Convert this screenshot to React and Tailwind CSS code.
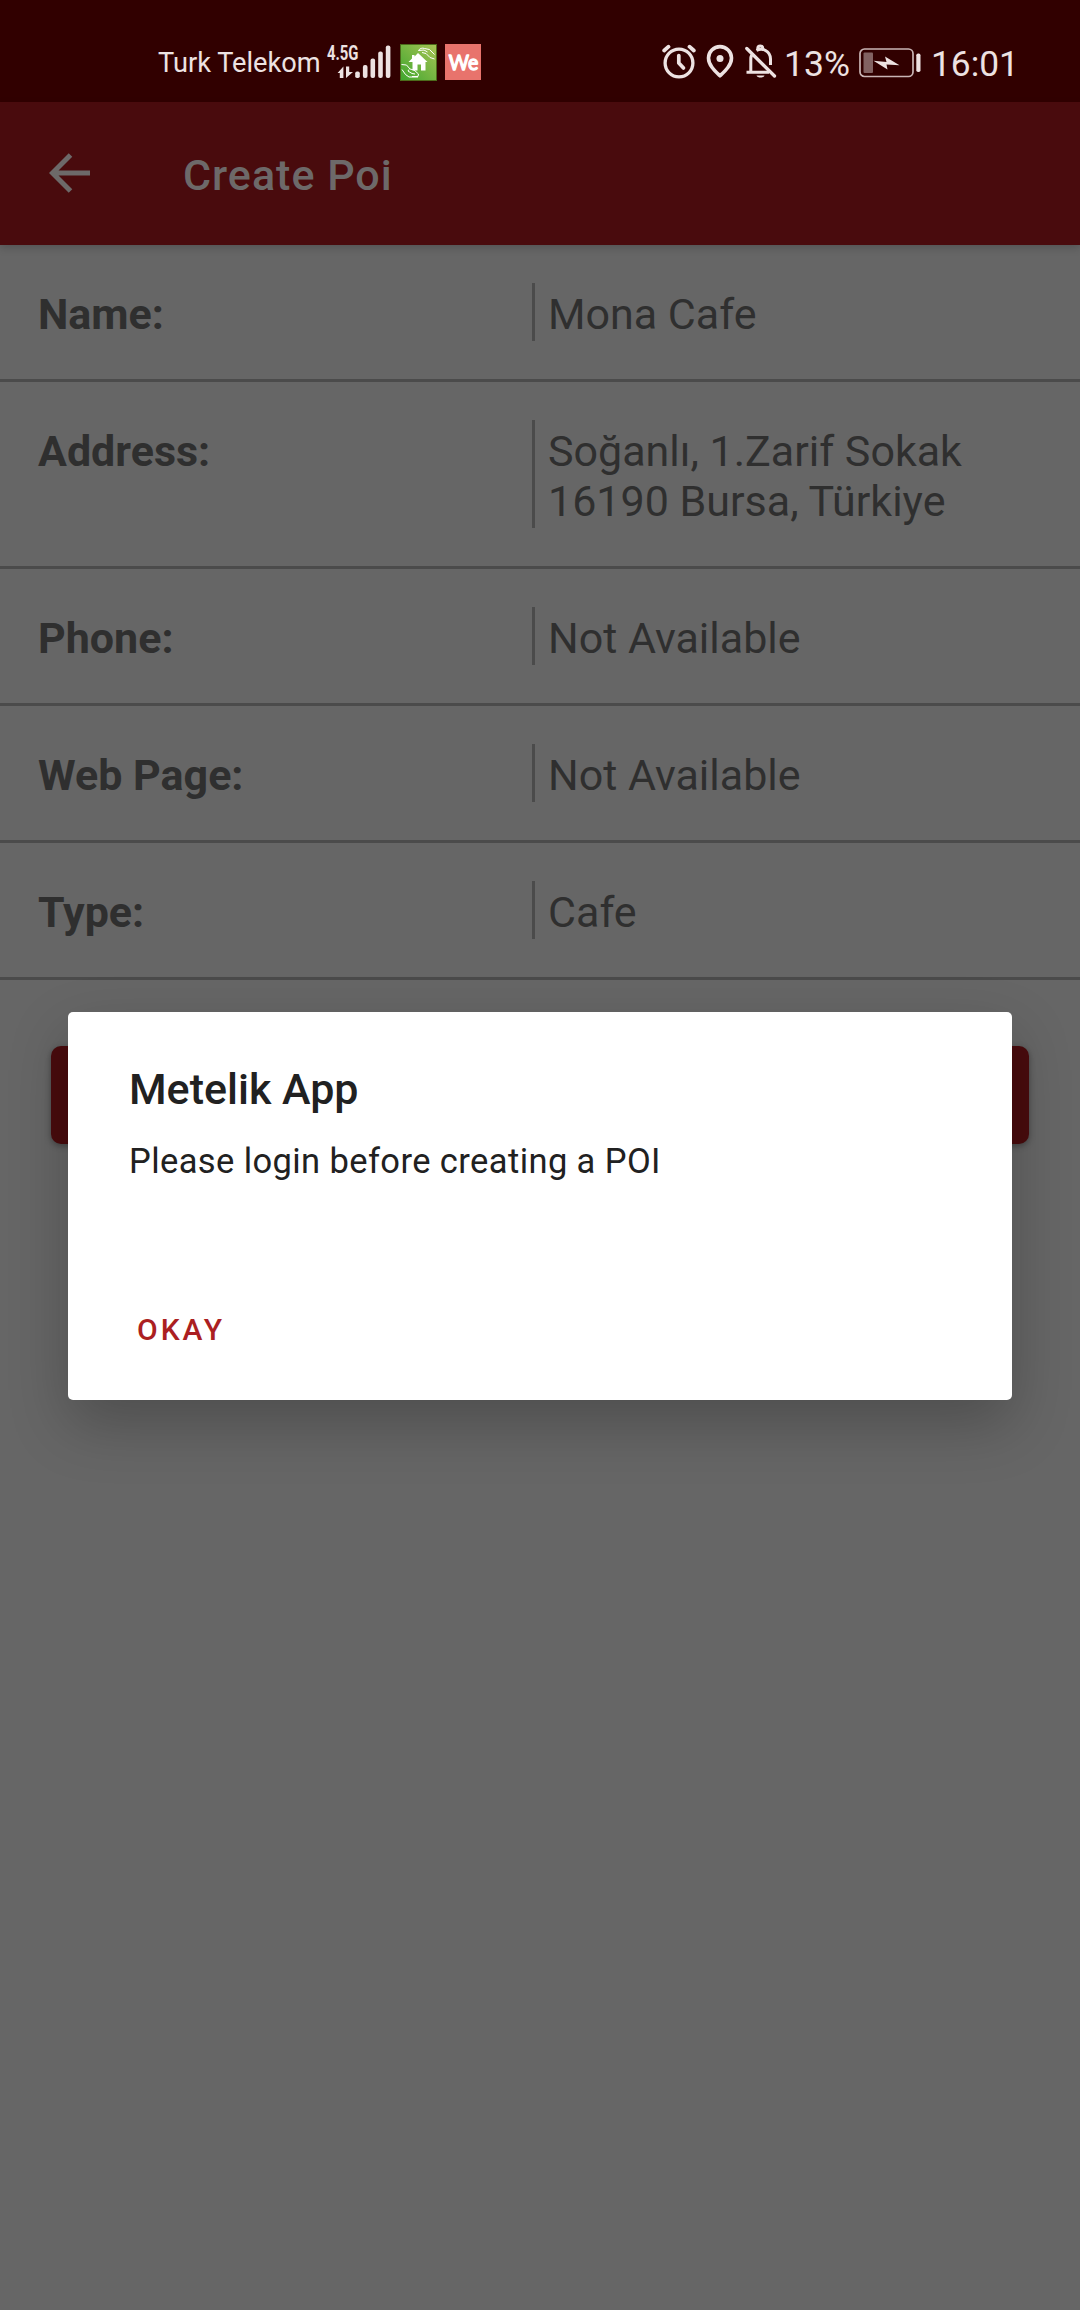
const fields = [
  { label: 'Name:', lines: ['Mona Cafe'] },
  { label: 'Address:', lines: ['Soğanlı, 1.Zarif Sokak', '16190 Bursa, Türkiye'] },
  { label: 'Phone:', lines: ['Not Available'] },
  { label: 'Web Page:', lines: ['Not Available'] },
  { label: 'Type:', lines: ['Cafe'] },
];

function Signal() {
  return (
    <svg className="ml-[7px] h-[36px] w-[64px] shrink-0 overflow-visible" viewBox="0 0 64 36" fill="#ede2e2">
      <text x="0" y="16.300" fontFamily="Roboto" fontWeight="700" fontSize="20.5" textLength="31.5" lengthAdjust="spacingAndGlyphs">4.5G</text>
      <path d="M10.6 29 16.4 22.500V34h-3.600v-5zM19 22.500h3.200v5.400h3.800L19 34z" />
      <rect x="28.200" y="27.500" width="4.600" height="6.500" rx="1.800" />
      <rect x="35.900" y="21" width="4.600" height="13" rx="2" />
      <rect x="43.500" y="14.500" width="4.600" height="19.500" rx="2" />
      <rect x="51.200" y="7.500" width="4.600" height="26.500" rx="2" />
      <rect x="58.800" y="1.500" width="4.600" height="32.500" rx="2" />
    </svg>
  );
}

function HomeBadge() {
  return (
    <svg className="ml-[9px] h-[37px] w-[37px] shrink-0" viewBox="0 0 37 37">
      <defs>
        <linearGradient id="leaf" x1="0" y1="1" x2="1" y2="0">
          <stop offset="0" stopColor="#3fa62e" />
          <stop offset="1" stopColor="#a9c455" />
        </linearGradient>
      </defs>
      <rect x="0.5" y="0.5" width="36" height="36" fill="url(#leaf)" stroke="#4c6b1b" />
      <path d="M18 9 27.500 18H25.500V26.500h-4.500v-6h-3.500v6H12.500V18H8.500l3.500-3.500V11h2.500v1.500z" fill="#fff" />
      <path d="M18.500 6.500c1-2 4-3 6-2l5 1 5 5M18.500 6.500 24 6l3.500 2M22 8.500l4 1 4 4 4.500 1.500M1.500 20.500l5 .5 3.500 4 4 1 4.500 4-.5 2.500h-6M2 25.500l3.500 5L9 33h9M9 25.500l-1 1.500 4 2.500 3 .5" fill="none" stroke="#fff" strokeWidth="1" />
    </svg>
  );
}

function WeBadge() {
  return (
    <svg className="ml-[8px] h-[36px] w-[36px] shrink-0" viewBox="0 0 36 36">
      <rect width="36" height="36" fill="#e8736c" />
      <text x="3.800" y="25.500" fontFamily="Lato" fontWeight="400" fontSize="22" fill="#fff" stroke="#fff" strokeWidth="1.400" strokeLinejoin="round" textLength="29.500" lengthAdjust="spacingAndGlyphs">We</text>
    </svg>
  );
}

function Alarm() {
  return (
    <svg className="h-[35px] w-[34px] shrink-0" viewBox="0 0 34 35" fill="none" stroke="#ede2e2" strokeWidth="3.300">
      <circle cx="17" cy="19" r="13.900" />
      <path d="M16.800 11.500v7.500l4.700 5" strokeWidth="3.700" strokeLinecap="round" strokeLinejoin="round" />
      <path d="M2.200 6.500 6.500 2.700M31.800 6.500 27.500 2.700" strokeWidth="3.800" strokeLinecap="round" />
    </svg>
  );
}

function Pin() {
  return (
    <svg className="ml-[10px] h-[35px] w-[28px] shrink-0" viewBox="0 0 28 35" fill="none">
      <path d="M14 31.800C9 27 2.500 21.300 2.500 13.900a11.500 11.300 0 0 1 23 0C25.500 21.300 19 27 14 31.800z" stroke="#ede2e2" strokeWidth="3.600" strokeLinejoin="round" />
      <circle cx="14" cy="14.500" r="3.500" fill="#ede2e2" />
    </svg>
  );
}

function BellOff() {
  return (
    <svg className="ml-[11px] h-[35px] w-[32px] shrink-0" viewBox="0 0 32 35" fill="none" stroke="#ede2e2" strokeWidth="3">
      <path d="M5.800 28V15c0-1.500.3-2.700.9-4M1.500 28.300H24M11.500 6.500C14 5.200 18 5 20.500 6.500c3.500 2 5 5 5 8.500v6" />
      <path d="M12.800 6V4.500c0-3.200 5-3.200 5 0V6" />
      <path d="M1.800 4.500 29.500 32" strokeWidth="3.300" strokeLinecap="round" />
      <path d="M11.500 31.500h8c-1 2.800-7 2.800-8 0z" fill="#ede2e2" stroke="none" />
    </svg>
  );
}

function Battery() {
  return (
    <svg className="ml-[9px] h-[30px] w-[62px] shrink-0" viewBox="0 0 62 30">
      <rect x="1" y="1" width="53" height="27.500" rx="4.500" fill="none" stroke="#c9b5b5" strokeWidth="1.700" />
      <rect x="4.500" y="4.500" width="9.500" height="20.500" rx="1" fill="#826262" />
      <path d="M14.500 12.700 27.500 14 26 8.500 40.500 17.200 27.500 16.600 28.500 21.500z" fill="#ede2e2" />
      <rect x="57.300" y="5.500" width="4.200" height="18.500" rx="1.800" fill="#ede2e2" />
    </svg>
  );
}

function StatusBar() {
  return (
    <div className="flex h-[102px] items-start bg-[#310000] pt-[44px] text-[#ede2e2]">
      <div className="ml-[158px] w-[162px] pt-[1px] text-[27.2px] leading-[36px] whitespace-nowrap">Turk Telekom</div>
      <Signal />
      <HomeBadge />
      <WeBadge />
      <div className="ml-[181px] flex">
        <Alarm />
        <Pin />
        <BellOff />
      </div>
      <div className="ml-[7px] w-[66px] pt-[1px] text-[35.5px] leading-[39px] whitespace-nowrap">13%</div>
      <div className="pt-[4px]"><Battery /></div>
      <div className="ml-[10px] pt-[1px] text-[35.3px] leading-[39px] whitespace-nowrap">16:01</div>
    </div>
  );
}

function AppBar() {
  return (
    <header className="relative flex h-[143px] items-center bg-[#490b0d] text-[#6d6969] shadow-[0_3px_8px_rgba(0,0,0,0.18)]">
      <svg className="mb-[2px] ml-[49px] h-[40px] w-[41px] shrink-0" viewBox="0 0 41 40" fill="none" stroke="currentColor" strokeWidth="5">
        <path d="M41 20H4M21.500 2 3.500 20l18 18" />
      </svg>
      <h1 className="ml-[93px] pt-[2px] text-[43px] leading-[50px] font-medium tracking-[1px]">Create Poi</h1>
    </header>
  );
}

function Row({ label, lines }) {
  return (
    <div className="flex border-b-[3px] border-[#4b4b4b] py-[38px] pl-[38px] text-[43px] leading-[50px] text-[#2f2f2f]">
      <div className="w-[494px] pt-[6px] font-bold">{label}</div>
      <div className="border-l-[3px] border-[#4b4b4b] pt-[6px] pb-[2px] pl-[13px] whitespace-nowrap">
        {lines.map((line) => (
          <div key={line}>{line}</div>
        ))}
      </div>
    </div>
  );
}

function Dialog() {
  return (
    <div className="absolute inset-0 flex items-start justify-center pt-[1012px]">
      <div role="dialog" className="flex h-[388px] w-[944px] flex-col items-start rounded-[5px] bg-white px-[61px] pt-[52px] text-[#212121] shadow-[0_24px_60px_rgba(0,0,0,0.24)]">
        <h2 className="text-[43px] leading-[50px] font-medium">Metelik App</h2>
        <p className="mt-[26px] text-[34.5px] leading-[42px] tracking-[0.4px]">Please login before creating a POI</p>
        <button className="mt-[128px] ml-[8px] text-[30px] leading-[40px] font-medium tracking-[3px] text-[#ab1f22]">OKAY</button>
      </div>
    </div>
  );
}

export default function App() {
  return (
    <div className="relative h-[2310px] w-[1080px] overflow-hidden bg-[#666666] font-[Roboto,sans-serif]">
      <StatusBar />
      <AppBar />
      <main>
        {fields.map((field) => (
          <Row key={field.label} {...field} />
        ))}
        <div className="mx-[51px] mt-[66px] h-[98px] rounded-[10px] bg-[#490b0d] shadow-[0_2px_6px_rgba(0,0,0,0.35)]" />
      </main>
      <Dialog />
    </div>
  );
}
